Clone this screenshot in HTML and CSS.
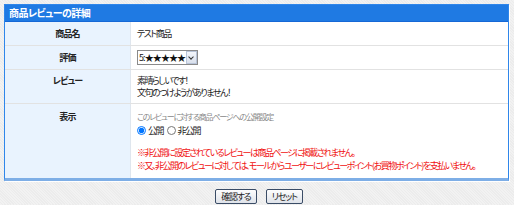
FILE: index.html
```html
<!DOCTYPE html>
<html lang="ja">
<head>
  <meta charset="UTF-8">
  <title>商品レビューの詳細</title>
  <link rel="stylesheet" href="styles.css">
</head>
<body>
  <div class="panel">
    <div class="panel-head">商品レビューの詳細</div>
    <table class="detail">
      <tr class="row-s">
        <th>商品名</th>
        <td>テスト商品</td>
      </tr>
      <tr class="row-s">
        <th>評価</th>
        <td>
          <span class="rate-wrap">
            <select class="rate">
              <option>5:★★★★★</option>
              <option>4:★★★★</option>
              <option>3:★★★</option>
              <option>2:★★</option>
              <option>1:★</option>
            </select>
            <span class="rate-arrow"></span>
          </span>
        </td>
      </tr>
      <tr class="row-t">
        <th>レビュー</th>
        <td>素晴らしいです！<br>文句のつけようがありません！</td>
      </tr>
      <tr class="row-t row-last">
        <th>表示</th>
        <td>
          <div class="hint">このレビューに対する商品ページへの公開設定</div>
          <div class="radios">
            <label><input type="radio" name="pub" checked>公開</label>
            <label><input type="radio" name="pub">非公開</label>
          </div>
          <div class="note">※非公開に設定されているレビューは商品ページに掲載されません。</div>
          <div class="note">※又、非公開のレビューに対しては、モールからユーザーにレビューポイント(お買物ポイント)を支払いません。</div>
        </td>
      </tr>
    </table>
  </div>
  <div class="actions">
    <button class="btn">確認する</button>
    <button class="btn">リセット</button>
  </div>
</body>
</html>
```

FILE: styles.css
```css
body {
  margin: 0;
  padding: 4px 0 0 4px;
  font-family: "Noto Sans CJK JP", "DejaVu Sans", sans-serif;
  font-size: 9px;
  font-feature-settings: "palt";
  letter-spacing: -1.5px;
  color: #222;
  background: #efefef repeating-linear-gradient(45deg, #f2f2f2 0 1px, #ececec 1px 2px);
}
.panel {
  width: 503px;
  border: 1px solid #2f86ea;
  border-bottom: 3px solid #7eaee6;
  background: #fff;
  box-shadow: 1px 1px 0 #fff;
}
.panel-head {
  height: 16px;
  line-height: 16px;
  padding-left: 4px;
  background: #1f7ae3;
  border-bottom: 1px solid #1668d6;
  color: #fff;
  font-weight: bold;
  font-size: 10px;
  letter-spacing: -0.6px;
}
.detail {
  width: 100%;
  border-collapse: collapse;
}
.detail th {
  width: 125px;
  padding: 0;
  background: #e9f3fe;
  font-weight: bold;
  letter-spacing: -0.8px;
  border-right: 1px solid #dfe6ee;
  border-bottom: 1px solid #e2e2e2;
}
.detail td {
  padding: 0 0 0 6px;
  border-bottom: 1px solid #e2e2e2;
}
.row-s th, .row-s td { height: 23px; }
.row-t th, .row-t td {
  vertical-align: top;
  padding-top: 5px;
  line-height: 12px;
  height: 28px;
}
.row-last th, .row-last td {
  border-bottom: none;
  height: 67px;
  padding-top: 7px;
}
.rate-wrap {
  position: relative;
  display: inline-block;
  vertical-align: middle;
}
.rate {
  appearance: none;
  display: block;
  font-family: inherit;
  font-size: 9px;
  letter-spacing: -0.9px;
  height: 15px;
  width: 61px;
  padding: 0 0 0 1px;
  border: 1px solid #8a8a8a;
  border-radius: 0;
  background: #fff;
  color: #111;
}
.rate-arrow {
  position: absolute;
  right: 1px;
  top: 1px;
  width: 11px;
  height: 13px;
  box-sizing: border-box;
  border: 1px solid #b8c4d8;
  background: linear-gradient(#f4f6fb, #d9e0ec);
  pointer-events: none;
}
.rate-arrow::after {
  content: "";
  position: absolute;
  left: 2px;
  top: 3px;
  width: 3px;
  height: 3px;
  border-right: 1.5px solid #333;
  border-bottom: 1.5px solid #333;
  transform: rotate(45deg);
}
.hint {
  color: #888;
  font-size: 8px;
  letter-spacing: -1.2px;
  line-height: 12px;
}
.radios {
  margin-top: 2px;
  margin-bottom: 9px;
}
.radios label {
  margin-right: 3px;
}
.radios input {
  width: 9px;
  height: 9px;
  margin: 0 2px 0 0;
  vertical-align: -1px;
}
.note {
  color: #f01010;
  line-height: 13px;
}
.actions {
  display: flex;
  justify-content: center;
  gap: 9px;
  padding-top: 8px;
}
.btn {
  font-family: inherit;
  font-size: 9px;
  font-feature-settings: "palt";
  letter-spacing: -1.2px;
  height: 15px;
  padding: 0 5px;
  border: 1px solid #3a4c66;
  border-radius: 2px;
  background: linear-gradient(#fdfdfd, #dfe3ea);
  color: #222;
  line-height: 11px;
}
```
